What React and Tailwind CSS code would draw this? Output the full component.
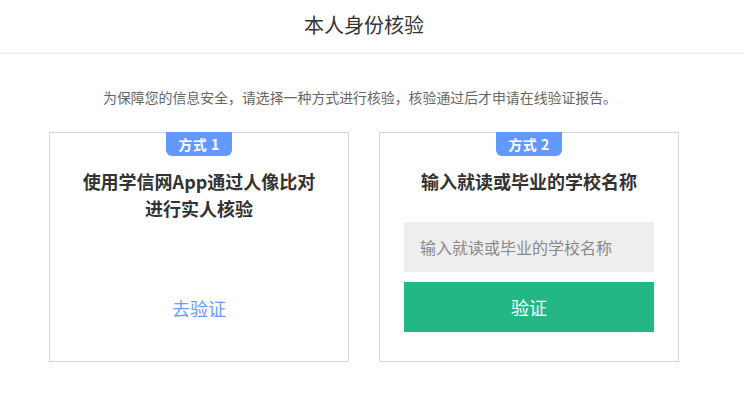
import React from 'react';

const font = { fontFamily: '"Noto Sans CJK SC", "Noto Sans", sans-serif' };

function Badge({ children }) {
  return (
    <div className="absolute left-1/2 top-[-1px] -translate-x-1/2 w-[66px] h-[24px] bg-[#6399ff] rounded-b-[6px] flex items-center justify-center text-white text-[14px] font-bold leading-none tracking-[0.5px]">
      {children}
    </div>
  );
}

export default function App() {
  return (
    <div className="min-h-screen bg-white text-[#333]" style={font}>
      {/* header */}
      <div className="h-[54px] border-b border-[#e8e8e8]">
        <div className="w-[728px] h-full flex items-center justify-center pb-[3px]">
          <h1 className="text-[20px] font-normal leading-none text-[#333]">本人身份核验</h1>
        </div>
      </div>

      <div className="w-[728px] flex flex-col items-center">
        <p className="mt-[34px] text-[13.9px] leading-[18px] text-[#666] -ml-[8px]">
          为保障您的信息安全，请选择一种方式进行核验，核验通过后才申请在线验证报告。
        </p>

        <div className="mt-[26px] flex gap-[30px]">
          {/* method 1 */}
          <div className="relative w-[300px] h-[230px] border border-[#d6d6d6] flex flex-col items-center">
            <Badge>方式&nbsp;1</Badge>
            <div className="mt-[35px] text-[18px] font-bold leading-[27px] text-center text-[#333]">
              使用学信网App通过人像比对
              <br />
              进行实人核验
            </div>
            <a href="#" className="mt-[73px] text-[18px] leading-[27px] text-[#6b9bff]">去验证</a>
          </div>

          {/* method 2 */}
          <div className="relative w-[300px] h-[230px] border border-[#d6d6d6] flex flex-col items-center">
            <Badge>方式&nbsp;2</Badge>
            <div className="mt-[35px] text-[18px] font-bold leading-[27px] text-center text-[#333]">
              输入就读或毕业的学校名称
            </div>
            <input
              type="text"
              placeholder="输入就读或毕业的学校名称"
              className="mt-[27px] w-[250px] h-[50px] bg-[#eeeeee] px-[16px] text-[16px] text-[#333] placeholder:text-[#888] outline-none"
              style={font}
            />
            <button className="mt-[10px] w-[250px] h-[50px] bg-[#23b785] text-white text-[18px]" style={font}>
              验证
            </button>
          </div>
        </div>
      </div>
    </div>
  );
}
